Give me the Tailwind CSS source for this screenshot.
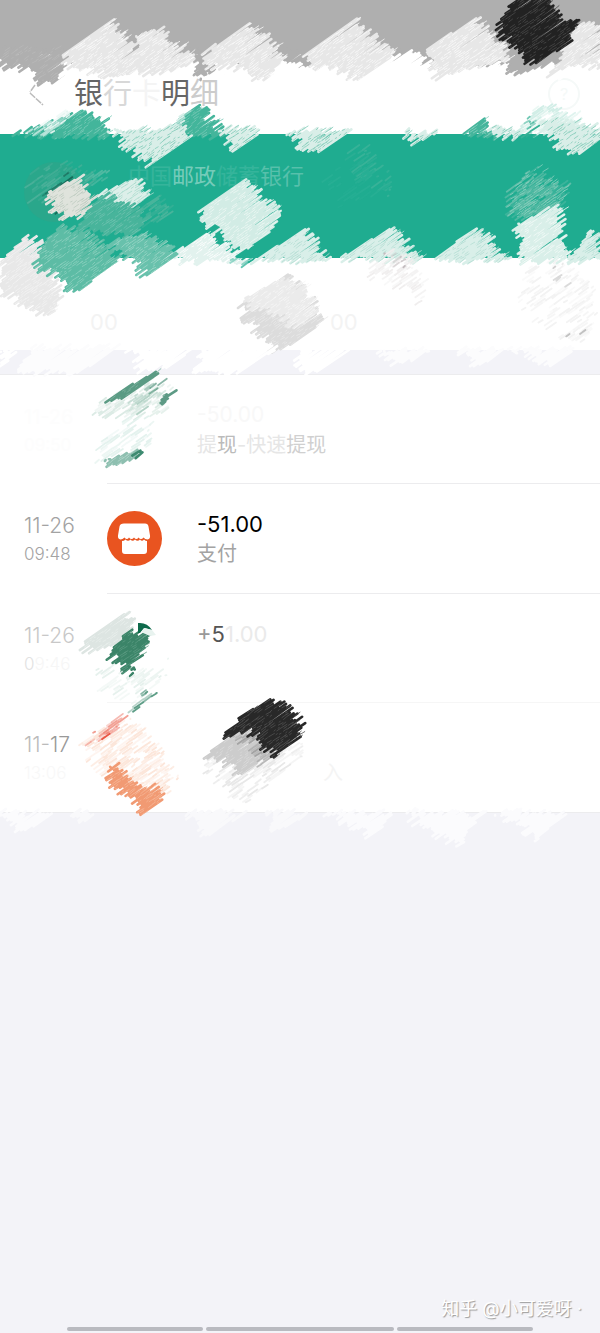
<!DOCTYPE html>
<html lang="zh-CN">
<head>
  <meta charset="UTF-8" />
  <meta name="viewport" content="width=device-width, initial-scale=1.0"/>
  <title>银行卡明细</title>
  <script src="https://cdn.jsdelivr.net/npm/@tailwindcss/browser@4"></script>
</head>
<body class="bg-[#f3f3f8] font-['Inter','Noto_Sans_CJK_SC',sans-serif] text-black">
<div class="relative flex min-h-screen flex-col overflow-hidden">

  <!-- Status bar -->
  <div class="h-[54px] bg-[#afafaf]"></div>

  <!-- Title bar -->
  <header class="flex h-20 items-center bg-white pl-6 pr-5">
    <button aria-label="返回" class="mr-[26px] h-6 w-6">
      <svg viewBox="0 0 24 24" class="h-6 w-6 fill-none stroke-[#bbb] stroke-[1.5]"><path d="M11 3 6 10M6 11l13 12" stroke-dasharray="7 1"/></svg>
    </button>
    <h1 class="flex-1 text-[29px]"><span class="text-[#666]">银</span><span class="text-[#d8d8d8]">行</span><span class="text-[#f4f4f4]">卡</span><span class="text-[#666]">明</span><span class="text-[#ccc]">细</span></h1>
    <button aria-label="帮助" class="h-8 w-8 rounded-full border-2 border-[#f5f9f8] text-[#f5f9f8]">?</button>
  </header>

  <!-- Bank card -->
  <section class="h-[124px] bg-[#1fac90] pl-6 pt-6">
    <div class="flex gap-11">
      <div class="mt-1 h-[60px] w-[60px] rounded-full bg-[#2aa78b]"></div>
      <h2 class="text-[22px] leading-9 text-white/10">中国<span class="text-white/40">邮政</span>储蓄<span class="text-white/25">银行</span></h2>
    </div>
  </section>

  <!-- Summary -->
  <section class="grid h-[92px] grid-cols-[1fr_1.4fr] items-center bg-white pt-9 text-[22px] text-[#f3f3f3]">
    <span class="pl-[90px]">00</span>
    <span class="pl-20">00</span>
  </section>

  <!-- Records -->
  <ul class="mt-6 border-y border-[#ececee] bg-white">
    <li class="flex h-[109px] pl-6">
      <div class="w-[83px] pt-[26px] text-[#fdfdfd]"><p class="text-xl leading-8">11-26</p><p class="text-[17px] leading-6">09:50</p></div>
      <div class="flex flex-1 border-b border-[#ececee] pt-[26px]">
        <div class="w-[90px]"></div>
        <div><p class="text-[21px] leading-7 text-[#f8f8f8]">-50.00</p><p class="text-xl leading-8 text-[#e6e6e6]">提<span class="text-[#bbb]">现</span>-快速<span class="text-[#d0d0d0]">提现</span></p></div>
      </div>
    </li>
    <li class="flex h-[110px] pl-6">
      <div class="w-[83px] pt-[26px] text-[#a3a3a3]"><p class="text-[21px] leading-8 font-light">11-26</p><p class="text-[17px] leading-6 font-light">09:48</p></div>
      <div class="flex flex-1 border-b border-[#ececee] pt-[26px]">
        <div class="w-[90px]">
          <svg viewBox="0 0 55 55" class="mt-px h-[55px] w-[55px]">
            <circle cx="27.500" cy="27.500" r="27.500" fill="#e95420"/>
            <path fill="#fff" d="M17 12.500h21q3 0 3.500 3l1.500 9q.5 3.500-2.500 4-2.500 0-4-2-2.500 3-5 0-2 3-4.500 0-2.500 3-5 0-2 3-4.500 0-2 2-4 2-3-.5-2.500-4l1.500-9q.5-3 4.500-3ZM15 30q2 0 3.500-1.500 2.500 2.500 5 0 2 2.500 4.500 0 2.500 2.500 5 0 2 2.500 4 0 1.500 1.500 3 1.500v10q0 3-3 3H18q-3 0-3-3Z"/>
          </svg>
        </div>
        <div><p class="text-[22px] leading-7">-51.00</p><p class="text-xl leading-8 text-[#a3a3a3]">支付</p></div>
      </div>
    </li>
    <li class="flex h-[109px] pl-6">
      <div class="w-[83px] pt-[26px] text-[#f6f6f6]"><p class="text-[21px] leading-8 font-light text-[#c8c8c8]">11-26</p><p class="text-[17px] leading-6 font-light"><span class="text-[#e2e2e2]">0</span>9:46</p></div>
      <div class="flex flex-1 border-b border-[#f6f6f6] pt-[26px]">
        <div class="w-[90px]"></div>
        <p class="text-[22px] leading-7 text-[#eaeaea]"><span class="text-[#999]">+</span><span class="text-[#555]">5</span>1.00</p>
      </div>
    </li>
    <li class="flex h-[109px] pl-6">
      <div class="w-[83px] pt-[26px] text-[#f8f8f8]"><p class="text-[21px] leading-8 font-light text-[#999]"><span class="text-[#bbb]">11-</span>17</p><p class="text-[17px] leading-6 font-light">13:06</p></div>
      <p class="pl-[216px] pt-14 text-xl text-[#f4f4f4]">入</p>
    </li>
  </ul>

  <!-- Footer -->
  <footer class="mt-auto">
    <p class="pr-[18px] pb-1 text-right text-lg leading-7 text-white [text-shadow:1px_1px_1px_#999]">知乎 @小可爱呀 ·</p>
    <div class="mx-auto mb-0.5 flex h-1 w-7/9 gap-[3px]">
      <span class="flex-[136] rounded-sm bg-[#b9bac0]"></span>
      <span class="flex-[188] rounded-sm bg-[#b9bac0]"></span>
      <span class="flex-[136] rounded-sm bg-[#b9bac0]"></span>
    </div>
  </footer>

  <!-- Brush marks over the private details -->
  <svg id="brush" viewBox="0 0 600 1333" class="pointer-events-none absolute left-0 top-0 w-full" aria-hidden="true"></svg>
</div>

<script>
  let seed = 7;
  function rnd() {
    seed = (seed * 16807) % 2147483647;
    return seed / 2147483647;
  }

  const brush = document.getElementById('brush');

  // fills a polygon with slanted strokes that have ragged ends
  // density: share of strokes kept, grain: colour of the thin lines on top
  function dab(points, color, density = 1, grain = null, slant = 35) {
    const a = slant * Math.PI / 180;
    const cos = Math.cos(a), sin = Math.sin(a);
    const p = points.split(' ').map(s => s.split(',').map(Number))
      .map(([x, y]) => [x * cos - y * sin, x * sin + y * cos]);
    const ys = p.map(q => q[1]);
    const paths = ['', '', ''];
    let fine = '';
    const at = (u, v) => (u * cos + v * sin).toFixed(1) + ' ' + (v * cos - u * sin).toFixed(1);
    for (let v = Math.min(...ys) + 1; v < Math.max(...ys); v += 2) {
      const hit = [];
      p.forEach((q, i) => {
        const r = p[(i + 1) % p.length];
        if ((q[1] > v) !== (r[1] > v)) hit.push(q[0] + (v - q[1]) * (r[0] - q[0]) / (r[1] - q[1]));
      });
      if (hit.length < 2) continue;
      const u0 = Math.min(...hit) + rnd() * 14 - 7;
      const u1 = Math.max(...hit) + rnd() * 12 - 6;
      if (density >= 1) {
        paths[0] += 'M' + at(u0, v) + 'L' + at(u1, v + rnd() * 2 - 1);
      } else {
        for (let u = u0; u < u1;) {
          const len = 3 + rnd() * 12;
          if (rnd() < density) paths[Math.floor(rnd() * 3)] += 'M' + at(u, v) + 'L' + at(Math.min(u + len, u1), v + rnd() - 0.5);
          u += len;
        }
      }
      for (let u = u0; grain && u < u1; u += 5) {
        if (rnd() < 0.5) fine += 'M' + at(u, v + rnd()) + 'L' + at(u + 2 + rnd() * 6, v + rnd());
      }
    }
    let out = '';
    paths.forEach((d, i) => {
      if (d) out += `<path d="${d}" fill="none" stroke="${color}" stroke-width="${density >= 1 ? 2.6 : 1.8}" stroke-linecap="round" opacity="${1 - i * 0.28}"/>`;
    });
    if (fine) out += `<path d="${fine}" fill="none" stroke="${grain}" stroke-width="0.8"/>`;
    brush.insertAdjacentHTML('beforeend', out);
  }

  // status bar edge
  dab('0,50 66,50 66,74 50,86 25,68 0,66', '#afafaf', 1, '#b9b9b9');
  dab('60,52 600,52 600,58 540,66 520,70 505,62 430,68 380,56 305,66 285,66 205,72 192,60 60,60', '#afafaf');
  dab('186,50 215,50 215,66 202,80', '#afafaf');
  dab('500,50 560,50 545,66 515,76', '#afafaf');
  dab('66,62 195,60 192,74 64,76', '#ffffff');
  dab('214,62 285,62 300,66 385,60 405,52 440,68 500,68 502,74 212,74', '#ffffff');
  dab('550,65 600,62 600,76 550,76', '#ffffff');
  dab('66,52 112,20 128,42 148,56 142,66 116,78 66,64', '#e7e7e7', 1, '#fafafa');
  dab('136,36 160,30 195,60 188,66 160,74 134,70', '#e7e7e7', 1, '#fafafa');
  dab('207,50 250,24 264,36 284,60 262,82 238,66 208,66', '#e7e7e7', 1, '#fafafa');
  dab('308,52 354,20 370,35 392,56 360,80 335,66 308,66', '#e7e7e7', 1, '#fafafa');
  dab('428,48 475,18 490,32 510,58 480,66 440,78 428,60', '#e7e7e7', 1, '#fafafa');
  dab('576,24 600,26 600,68 580,62 552,74', '#e7e7e7', 1, '#fafafa');
  dab('498,25 508,7 522,-4 550,-4 556,12 576,24 570,42 535,66 521,48 504,36', '#222222', 1, '#484848');

  // card top edge
  dab('14,134 60,120 75,110 104,118 108,136', '#43b59b', 1, '#7ccbb9');
  dab('26,132 65,110 76,112 50,134', '#dff3ee', .85);
  dab('162,136 185,114 200,104 206,116 225,136', '#43b59b', 1, '#78c8b6');
  dab('162,134 184,112 188,116 175,134', '#d8f0ea', .85);
  dab('462,134 480,122 500,136', '#45b59c', 1, '#8ad0c0');
  dab('515,134 535,108 550,104 575,114 590,134', '#d2eee7', .9);
  dab('526,134 532,112 536,136', '#38b196', .8);
  dab('110,130 188,128 188,138 152,164 128,146', '#d9eee8', 1, '#83cbb9');
  dab('222,128 262,130 236,150', '#d9eee8', 1, '#83cbb9');
  dab('292,130 350,132 315,154 300,146', '#d9eee8', 1, '#83cbb9');
  dab('404,132 438,132 418,143', '#d9eee8', 1, '#83cbb9');
  dab('490,128 524,134 512,140', '#d9eee8', 1, '#83cbb9');
  dab('542,120 600,128 600,140 576,158 560,146', '#d9eee8', 1, '#83cbb9');

  // card body
  dab('26,190 34,168 60,162 100,178 70,205 32,200', '#49b099', .5);
  dab('42,196 68,172 74,178 60,222 48,214', '#176b59', .3);
  dab('84,175 108,168 100,188', '#51b9a2', .6);
  dab('48,192 80,176 88,190 94,200 88,214 64,220 52,206', '#dfe3dc', 1, '#bccabf');
  dab('100,194 134,178 150,196 130,208', '#dcefe9', 1, '#a9dacd');
  dab('90,206 104,194 130,205 140,210 148,222 130,236 80,228', '#48b49b', 1, '#6dc2ae');
  dab('134,210 160,196 174,212 150,228', '#48b49b', .8);
  dab('200,210 244,179 256,192 282,214 270,232 245,251 220,232 200,218', '#d2ece5', 1, '#edf7f4');
  dab('345,155 362,142 372,160 396,188 388,198 360,176', '#38b298', .6);
  dab('320,175 365,160 390,190 340,205', '#27af94', .3);
  dab('510,190 532,168 566,184 564,206 510,222', '#5fbda8', .85, '#8acfbe');
  dab('514,226 554,205 562,222 560,236 574,260 520,262 526,240', '#d9efe9', 1, '#f3faf8');

  // card bottom edge
  dab('160,260 205,235 220,243 248,262', '#e2f2ee', 1, '#ffffff');
  dab('255,260 302,230 316,244 328,260', '#d9efe9', 1, '#b4ddd3');
  dab('336,260 390,228 404,242 418,260', '#d9efe9', 1, '#b4ddd3');
  dab('432,260 476,227 490,240 508,260', '#d9efe9', 1, '#b4ddd3');
  dab('570,260 585,234 600,235 600,260', '#d9efe9', 1, '#b4ddd3');
  dab('12,250 26,236 40,242 44,262 62,292 52,314 36,312 2,290 2,262', '#e8e8e8', 1, '#f2f2f2');
  dab('36,256 58,228 80,232 112,250 116,264 74,294 60,276 40,268', '#5dbca5', 1, '#8dd0bf');
  dab('112,242 140,236 170,245 176,256 146,276 132,260', '#68c1ac', 1, '#9ad5c7');
  dab('228,256 260,256 248,266', '#22ad91', .8);

  // summary
  dab('242,304 286,277 302,290 322,314 318,326 276,354 262,334 246,320', '#dcdcdc', 1, '#e8e8e8');
  dab('244,298 286,277 304,290 318,310 300,326 258,308', '#ebebeb', 1, '#f6f6f6');
  dab('370,262 392,250 412,262 428,290 422,302 400,286 372,280', '#f0eeee', .55);
  dab('376,256 394,250 408,266 386,270', '#c2bbbe', .4);
  dab('524,268 548,262 584,276 598,296 588,338 570,342 540,320 522,300', '#f3f3f3', .5);
  dab('540,264 556,264 572,286', '#cfcfcf', .3);
  dab('565,336 586,326 590,336 574,346', '#aaaaaa', .4);

  // gap above the list
  dab('0,348 18,352 2,366', '#ffffff');
  dab('30,348 118,348 80,372 20,372', '#fcfcfd');
  dab('130,348 190,348 178,362 145,372', '#ffffff');
  dab('205,348 278,348 240,372 196,370', '#ffffff');
  dab('300,348 348,350 318,372 298,372', '#ffffff');
  dab('380,350 434,350 396,366', '#fcfcfd');
  dab('460,350 508,350 476,366', '#fcfcfd');
  dab('512,350 574,350 556,364', '#fcfcfd');

  // first record
  dab('96,404 146,378 170,390 172,408 140,418 98,416', '#dcebe5', .65);
  dab('110,398 148,374 156,376 118,402', '#5b9b84', 1, '#7db29f');
  dab('148,386 164,380 158,392', '#5d9a85', .9);
  dab('162,396 174,390 166,402', '#5d9a85');
  dab('124,400 158,388 162,402 136,414', '#b4d3c7', .6);
  dab('98,446 120,420 150,412 156,442 120,462 98,460', '#e4f2ee', .45);
  dab('104,460 138,450 142,454 112,466', '#8ebfb0', 1, '#b2d5ca');
  dab('130,456 142,449 143,455', '#3d8a70');

  // third record
  dab('80,644 124,613 134,626 120,648 90,650', '#dde5e2', 1, '#e9efec');
  dab('106,654 130,630 148,634 144,650 134,662 132,676 122,662', '#3b8468', 1, '#5b9a82');
  brush.insertAdjacentHTML('beforeend', '<path d="M138 633v-10q9-1 14 7l-8-2-4 5z" fill="#0e6a4b"/><path d="m141 632 4-4 7 2 4 5-6 1z" fill="#e8f3ef"/>');
  dab('92,662 130,676 165,660 162,684 138,706 104,690', '#e6f1ed', .45);
  dab('142,692 156,692 138,710 130,710', '#5d9d86', .9);

  // fourth record
  dab('82,742 120,718 154,738 172,772 182,772 166,796 120,782 96,764', '#fce6da', .7);
  dab('84,738 118,717 126,718 96,744', '#f2a094', .75);
  dab('98,736 118,726 114,732 96,742', '#e95746', .9);
  dab('108,768 116,766 132,782 158,790 164,800 144,814 130,798 112,782', '#f19a73', 1, '#f6b595');
  dab('202,764 240,732 300,738 306,752 250,800 236,796', '#e8e8e8', .65);
  dab('204,758 236,730 252,736 270,752 244,774 220,760', '#cccccc', 1, '#dadada');
  dab('236,734 252,730 280,752 262,764 248,746', '#a3a3a3', .8);
  dab('226,732 246,712 270,698 280,704 302,724 300,736 276,756 262,742 250,730 228,738', '#282828', 1, '#505050');

  // below the list
  dab('0,812 52,814 28,830 10,826', '#fbfbfd');
  dab('75,812 98,814 78,822', '#f9f9fb');
  dab('188,812 245,814 208,836 196,822', '#f9f9fb');
  dab('266,812 308,814 276,832', '#f9f9fb');
  dab('328,812 392,814 372,836', '#fbfbfd');
  dab('406,812 482,814 458,846 420,824', '#fbfbfd');
  dab('498,812 566,814 540,838', '#fbfbfd');
</script>
</body>
</html>
